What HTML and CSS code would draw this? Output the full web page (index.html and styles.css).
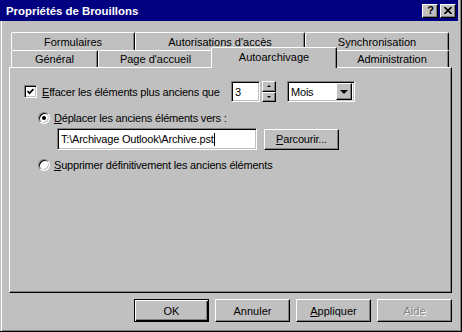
FILE: index.html
```html
<!DOCTYPE html>
<html lang="fr">
<head>
  <meta charset="UTF-8" />
  <title>Propriétés de Brouillons</title>
  <link rel="stylesheet" href="styles.css">
</head>
<body>

  <div class="window">
    <div class="titlebar">
      <span class="title">Propriétés de Brouillons</span>
      <div class="title-btns">
        <span class="tbtn help">?</span>
        <span class="tbtn">
          <svg width="8" height="7" viewBox="0 0 8 7">
            <path d="M0.5 0 L7.5 7 M7.5 0 L0.5 7" stroke="#000" stroke-width="1.6" />
          </svg>
        </span>
      </div>
    </div>

    <div class="dialog">
      <div class="tabs">
        <div class="tab-row back">
          <div class="tab">Formulaires</div>
          <div class="tab">Autorisations d'accès</div>
          <div class="tab">Synchronisation</div>
        </div>
        <div class="tab-row front">
          <div class="tab">Général</div>
          <div class="tab">Page d'accueil</div>
          <div class="tab active">Autoarchivage</div>
          <div class="tab">Administration</div>
        </div>
      </div>

      <div class="panel">
        <div class="row first">
          <span class="checkbox">
            <svg width="7" height="7" viewBox="0 0 7 7">
              <path d="M0.5 3 L2.5 5.2 L6.5 1" fill="none" stroke="#000" stroke-width="1.7" />
            </svg>
          </span>
          <span class="chk-label"><u>E</u>ffacer les éléments plus anciens que</span>
          <span class="field num">3</span>
          <span class="spinner">
            <span class="spin up"><i></i></span>
            <span class="spin down"><i></i></span>
          </span>
          <span class="field combo">
            <span class="combo-text">Mois</span>
            <span class="combo-btn"><i></i></span>
          </span>
        </div>

        <div class="row radio-row">
          <span class="radio checked"></span>
          <span><u>D</u>éplacer les anciens éléments vers :</span>
        </div>

        <div class="row path-row">
          <span class="field path">T:\Archivage Outlook\Archive.pst<span class="caret"></span></span>
          <span class="btn browse"><u>P</u>arcourir...</span>
        </div>

        <div class="row radio-row second">
          <span class="radio"></span>
          <span><u>S</u>upprimer définitivement les anciens éléments</span>
        </div>
      </div>

      <div class="actions">
        <span class="btn default">OK</span>
        <span class="btn">Annuler</span>
        <span class="btn"><u>A</u>ppliquer</span>
        <span class="btn disabled">Aide</span>
      </div>
    </div>
  </div>

</body>
</html>
```

FILE: styles.css
```css
* {
  box-sizing: border-box;
}
body {
  margin: 0;
  background: #c0c0c0;
  font-family: 'Liberation Sans', Arial, sans-serif;
  font-size: 11px;
  color: #000;
}

/* Fenêtre */
.window {
  width: 462px;
  height: 332px;
  background: #c0c0c0;
  border-right: 1px solid #000;
  border-bottom: 1px solid #000;
  box-shadow: inset -1px -1px #808080;
  display: flex;
  flex-direction: column;
}

.titlebar {
  height: 21px;
  margin-right: 3px;
  background: #000080;
  color: #fff;
  display: flex;
  align-items: center;
  justify-content: space-between;
  padding: 0 2px 0 6px;
}
.title {
  font-weight: bold;
  font-size: 11.4px;
}
.title-btns {
  display: flex;
  gap: 2px;
}
.tbtn {
  width: 16px;
  height: 14px;
  background: #c0c0c0;
  border: 1px solid;
  border-color: #fff #000 #000 #fff;
  box-shadow: inset -1px -1px #808080;
  display: flex;
  align-items: center;
  justify-content: center;
  color: #000;
}
.tbtn.help {
  font-weight: bold;
  font-size: 11px;
  line-height: 1;
  padding-left: 1px;
}

.dialog {
  flex: 1;
  border-left: 1px solid #c0c0c0;
  box-shadow: inset 1px 0 #fff;
  display: flex;
  flex-direction: column;
}

/* Onglets */
.tabs {
  margin: 11px 0 0 10px;
  width: 438px;
}
.tab-row {
  display: grid;
}
.tab-row.back {
  grid-template-columns: 124px 170px 144px;
  height: 18px;
}
.tab-row.front {
  grid-template-columns: 87px 115px 122px 114px;
  height: 17px;
}
.tab {
  background: #c0c0c0;
  border: 1px solid;
  border-bottom: none;
  border-color: #fff #000 transparent #fff;
  border-radius: 2px 2px 0 0;
  box-shadow: inset -1px 0 #808080;
  text-align: center;
  padding-top: 2px;
}
.tab-row.back .tab {
  padding-top: 3px;
}
.tab.active {
  position: relative;
  z-index: 1;
  margin: -3px -2px -1px;
  padding-top: 3px;
}

/* Panneau */
.panel {
  margin-left: 8px;
  width: 443px;
  height: 226px;
  border: 1px solid;
  border-color: #fff #000 #000 #fff;
  box-shadow: inset -1px -1px #808080;
  padding: 13px 0 0 14px;
  letter-spacing: -0.2px;
}
.row {
  display: flex;
  align-items: center;
}
.row.first {
  height: 21px;
}
.chk-label {
  margin-left: 5px;
  width: 189px;
}

.checkbox {
  width: 13px;
  height: 13px;
  background: #fff;
  border: 1px solid;
  border-color: #808080 #fff #fff #808080;
  box-shadow: inset 1px 1px #000, inset -1px -1px #c0c0c0;
  display: flex;
  align-items: center;
  justify-content: center;
}

.field {
  background: #fff;
  border: 1px solid;
  border-color: #808080 #fff #fff #808080;
  box-shadow: inset 1px 1px #000, inset -1px -1px #c0c0c0;
  display: flex;
  align-items: center;
  padding-left: 3px;
  white-space: nowrap;
}
.field.num {
  width: 29px;
  height: 21px;
}
.spinner {
  width: 14px;
  height: 21px;
  margin-left: 2px;
  display: flex;
  flex-direction: column;
}
.spin {
  flex: 1;
  background: #c0c0c0;
  border: 1px solid;
  border-color: #fff #000 #000 #fff;
  box-shadow: inset -1px -1px #808080;
  display: flex;
  align-items: center;
  justify-content: center;
}
.spin i {
  width: 0;
  height: 0;
  border-left: 2px solid transparent;
  border-right: 2px solid transparent;
}
.spin.up i {
  border-bottom: 2px solid #000;
}
.spin.down i {
  border-top: 2px solid #000;
}

.field.combo {
  width: 68px;
  height: 21px;
  margin-left: 11px;
  padding: 2px;
  justify-content: space-between;
}
.combo-text {
  padding-left: 1px;
}
.combo-btn {
  width: 16px;
  height: 17px;
  background: #c0c0c0;
  border: 1px solid;
  border-color: #fff #000 #000 #fff;
  box-shadow: inset -1px -1px #808080;
  display: flex;
  align-items: center;
  justify-content: center;
}
.combo-btn i {
  border-left: 4px solid transparent;
  border-right: 4px solid transparent;
  border-top: 4px solid #000;
}

.radio-row {
  height: 16px;
  margin: 8px 0 0 14px;
  gap: 4px;
}
.radio-row.second {
  margin-top: 7px;
}
.radio {
  width: 12px;
  height: 12px;
  border-radius: 50%;
  background: #fff;
  border: 1px solid;
  border-color: #808080 #fff #fff #808080;
  box-shadow: inset 1px 1px #000, inset -1px -1px #c0c0c0;
  display: flex;
  align-items: center;
  justify-content: center;
}
.radio.checked::after {
  content: "";
  width: 4px;
  height: 4px;
  border-radius: 50%;
  background: #000;
}

.path-row {
  margin: 2px 0 0 33px;
  gap: 7px;
}
.field.path {
  width: 200px;
  height: 22px;
}
.caret {
  width: 1px;
  height: 13px;
  background: #000;
}

/* Boutons */
.btn {
  width: 75px;
  height: 23px;
  background: #c0c0c0;
  border: 1px solid;
  border-color: #fff #000 #000 #fff;
  box-shadow: inset -1px -1px #808080;
  display: flex;
  align-items: center;
  justify-content: center;
}
.btn.browse {
  height: 21px;
}
.btn.default {
  border-color: #000;
  box-shadow: inset 1px 1px #fff, inset -1px -1px #000, inset -2px -2px #808080;
}
.btn.disabled {
  color: #808080;
  text-shadow: 1px 1px #fff;
}

.actions {
  display: flex;
  gap: 6px;
  width: 451px;
  margin-top: 6px;
  justify-content: flex-end;
}
```
